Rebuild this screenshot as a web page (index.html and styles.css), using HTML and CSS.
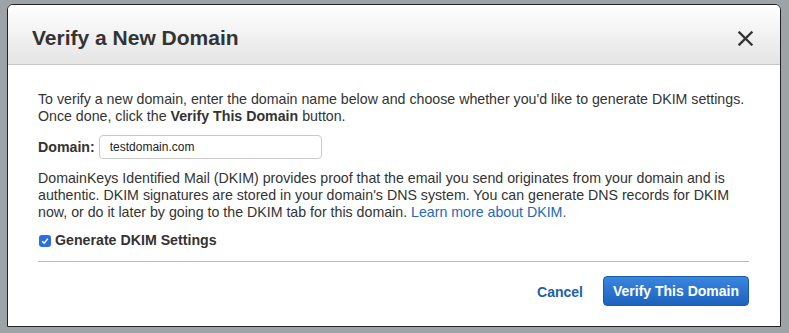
FILE: index.html
```html
<!DOCTYPE html>
<html>
<head>
    <meta charset="UTF-8">
    <title>Verify a New Domain</title>
    <link rel="stylesheet" href="styles.css">
</head>
<body>
    <div class="modal">
        <div class="modal-header">
            <div class="modal-title">Verify a New Domain</div>
            <button class="close-btn" aria-label="Close">
                <svg width="15" height="15" viewBox="0 0 15 15">
                    <path d="M1.5 1.5 L13.5 13.5 M13.5 1.5 L1.5 13.5" stroke="#333" stroke-width="2.3" stroke-linecap="square"/>
                </svg>
            </button>
        </div>

        <div class="modal-body">
            <p class="intro">To verify a new domain, enter the domain name below and choose whether you'd like to generate DKIM settings. Once done, click the <b>Verify This Domain</b> button.</p>

            <div class="field-row">
                <label class="field-label" for="domain">Domain:</label>
                <input id="domain" class="field-input" type="text" value="testdomain.com">
            </div>

            <p class="dkim-text">DomainKeys Identified Mail (DKIM) provides proof that the email you send originates from your domain and is authentic. DKIM signatures are stored in your domain's DNS system. You can generate DNS records for DKIM now, or do it later by going to the DKIM tab for this domain. <a href="#" class="link">Learn more about DKIM.</a></p>

            <label class="check-row">
                <span class="check-box">
                    <svg width="8" height="8" viewBox="0 0 8 8">
                        <path d="M1.2 4.2 L3.2 6.2 L6.8 1.6" fill="none" stroke="#fff" stroke-width="1.5"/>
                    </svg>
                </span>
                <span class="check-label">Generate DKIM Settings</span>
            </label>

            <div class="divider"></div>

            <div class="modal-footer">
                <a href="#" class="cancel-link">Cancel</a>
                <button class="primary-btn">Verify This Domain</button>
            </div>
        </div>
    </div>
</body>
</html>
```

FILE: styles.css
```css
body {
    font-family: 'Liberation Sans', Arial, Helvetica, sans-serif;
    margin: 0;
    padding: 4px 8px 0 7px;
    background-color: #9ea3a8;
    color: #333;
    overflow: hidden;
    height: 333px;
    box-sizing: border-box;
}
.modal {
    width: 774px;
    height: 323px;
    box-sizing: border-box;
    background-color: #fff;
    border: 1px solid #222;
    border-radius: 6px 6px 0 0;
    overflow: hidden;
}
.modal-header {
    height: 60px;
    box-sizing: border-box;
    display: flex;
    justify-content: space-between;
    align-items: center;
    padding: 0 27px 0 24px;
    background: linear-gradient(to bottom, #ffffff, #e4e4e4);
    border-bottom: 1px solid #c8c8c8;
}
.modal-title {
    font-size: 21px;
    font-weight: bold;
    color: #333;
    padding-top: 7px;
}
.close-btn {
    background: none;
    border: none;
    padding: 0;
    margin-top: 7px;
    cursor: pointer;
    display: flex;
}
.modal-body {
    padding: 26px 31px 0 30px;
    font-size: 14.2px;
    line-height: 17px;
}
.intro {
    margin: 0;
}
.intro b {
    line-height: 16px;
}
.field-row {
    display: flex;
    align-items: center;
    gap: 4px;
    margin-top: 10px;
}
.field-label {
    font-weight: bold;
}
.field-input {
    width: 223px;
    height: 24px;
    box-sizing: border-box;
    border: 1px solid #c9c9c9;
    border-radius: 4px;
    padding: 0 10px;
    font-family: inherit;
    font-size: 12px;
    color: #222;
}
.dkim-text {
    margin: 11px 0 0;
}
.link {
    color: #1f69b8;
    text-decoration: none;
    line-height: 16px;
}
.check-row {
    display: flex;
    align-items: center;
    gap: 4px;
    margin-top: 11px;
    margin-left: 1px;
    font-weight: bold;
    cursor: pointer;
}
.check-box {
    width: 12px;
    height: 12px;
    border-radius: 3px;
    background-color: #2c6fe0;
    display: flex;
    align-items: center;
    justify-content: center;
}
.divider {
    height: 1px;
    background-color: #bcbcbc;
    margin-top: 12px;
}
.modal-footer {
    display: flex;
    justify-content: flex-end;
    align-items: center;
    gap: 20px;
    margin-top: 14px;
}
.cancel-link {
    color: #1d5fa8;
    font-weight: bold;
    font-size: 14px;
    text-decoration: none;
    padding-top: 2px;
}
.primary-btn {
    height: 30px;
    padding: 0 9px;
    border: 1px solid #1b5ca8;
    border-radius: 4px;
    background: linear-gradient(to bottom, #3a86df, #1d62bd);
    color: #fff;
    font-family: inherit;
    font-size: 14px;
    font-weight: bold;
    cursor: pointer;
}
```
